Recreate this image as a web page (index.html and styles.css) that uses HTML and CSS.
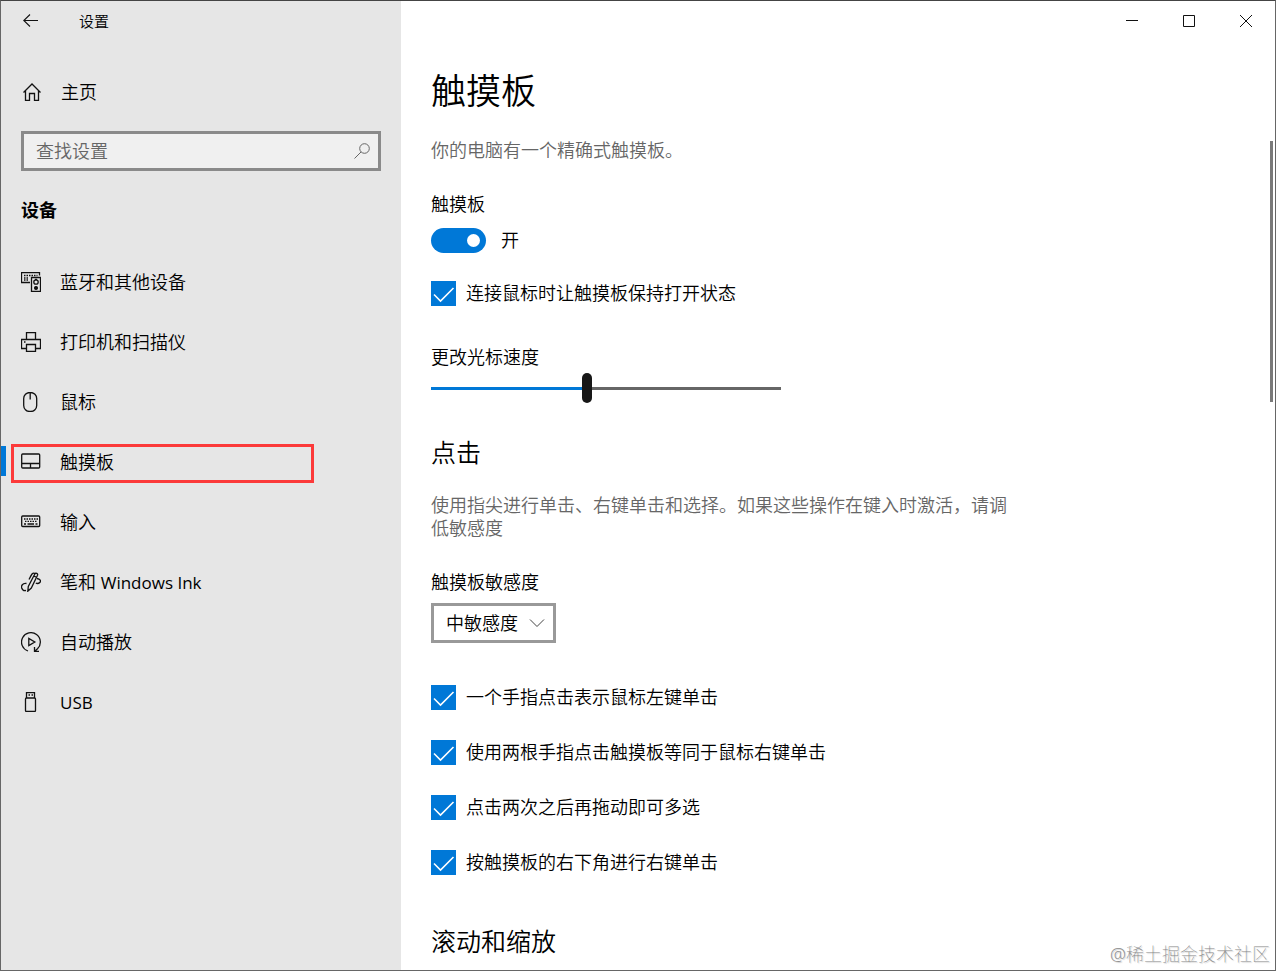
FILE: index.html
```html
<!DOCTYPE html>
<html lang="zh-CN">
<head>
<meta charset="UTF-8" />
<meta name="viewport" content="width=device-width, initial-scale=1" />
<title>设置</title>
<link rel="stylesheet" href="styles.css">
</head>
<body>

<div class="window">

  <!-- Sidebar -->
  <aside class="sidebar">
    <header class="titlebar">
      <button class="back" type="button" aria-label="返回">
        <svg width="16" height="14" viewBox="0 0 16 14"><path d="M7 .5L.8 6.500 7 12.500M.8 6.500H15" /></svg>
      </button>
      <span class="app-name">设置</span>
    </header>

    <a class="home" href="#">
      <svg width="20" height="20" viewBox="0 0 20 20"><path d="M1.500 10.500L10 2l8.500 8.500M3.500 9v9.300h4v-6.800h5v6.800h4V9" /></svg>
      <span>主页</span>
    </a>

    <div class="search">
      <input type="text" placeholder="查找设置" aria-label="查找设置" />
      <svg width="16" height="16" viewBox="0 0 16 16"><circle cx="10.500" cy="5.500" r="4.800" /><path d="M7 9l-6.500 6.500" /></svg>
    </div>

    <h2 class="group">设备</h2>

    <nav class="menu">
      <a href="#">
        <svg width="20" height="20" viewBox="0 0 20 20">
          <path d="M9 10.500H.5V.5h18v3" />
          <path d="M3 3.500h13.500M3 6h5M3 8h5" stroke-dasharray="1.500 1" />
          <path d="M10.500 5.500h9v14h-9z" />
          <circle cx="15" cy="10" r="2.200" /><circle cx="15" cy="16" r="1.400" class="solid" /><path d="M14 7.500h2" />
        </svg>
        <span>蓝牙和其他设备</span>
      </a>
      <a href="#">
        <svg width="20" height="20" viewBox="0 0 20 20">
          <path d="M5.500 7.500v-7h9v7M5.500 16.500h-5v-9h19v9h-5M5.500 12.500h9v7h-9zM3 10h1.500" />
        </svg>
        <span>打印机和扫描仪</span>
      </a>
      <a href="#">
        <svg width="20" height="20" viewBox="0 0 20 20"><rect x="2.700" y=".5" width="13" height="19" rx="6" /><path d="M9.200 1v6.500" /></svg>
        <span>鼠标</span>
      </a>
      <a href="#" class="current" aria-current="page">
        <svg width="20" height="20" viewBox="0 0 20 20"><rect x=".7" y="2" width="18" height="14" rx="1" /><path d="M1 11.500h18M9.500 11.500V16" /></svg>
        <span>触摸板</span>
      </a>
      <a href="#">
        <svg width="20" height="20" viewBox="0 0 20 20">
          <rect x=".7" y="4" width="18" height="10.500" rx="1" />
          <path d="M3 7h14" stroke-dasharray="1.500 1" /><path d="M4 9.300h12" stroke-dasharray="1.500 1" />
          <path d="M3 12h2M6.500 12h6.500M14.500 12h2" />
        </svg>
        <span>输入</span>
      </a>
      <a href="#">
        <svg width="20" height="20" viewBox="0 0 20 20">
          <path d="M6.800 19.200l.5-4.700L13.800 2c.9-1.600 3.400-.4 2.700 1.300L10.300 16zM12.800 4l2.800 1.400M13.600 1.300C11.500.3 10.500 2.500 8 7.500" />
          <path d="M5.500 11.500C1.500 10.800 0 14 .7 16c.7 2 2.300 3 4.300 2.500" />
          <path d="M16 6.500c3.300.5 4.300 2.500 2.800 4-1 1-2.500 1.200-4 .7" />
        </svg>
        <span>笔和 <span class="latin" lang="en">Windows Ink</span></span>
      </a>
      <a href="#">
        <svg width="20" height="20" viewBox="0 0 20 20">
          <path d="M7 19A9.400 9.400 0 1 1 16.500 16.800L13.500 19.500M13.500 15v4.500H18" />
          <path d="M7.800 6.500v7l6-3.500z" />
        </svg>
        <span>自动播放</span>
      </a>
      <a href="#">
        <svg width="20" height="20" viewBox="0 0 20 20">
          <rect x="4.500" y="6" width="10" height="13.500" rx="1" /><path d="M5.500 6V.5h8V6M7.500 3h1.500M10.500 3h1.500" />
        </svg>
        <span class="latin" lang="en">USB</span>
      </a>
    </nav>
  </aside>

  <!-- Page -->
  <main class="page">
    <header class="titlebar controls">
      <button type="button" aria-label="最小化"><svg width="12" height="12" viewBox="0 0 12 12"><path d="M0 5.500h12" /></svg></button>
      <button type="button" aria-label="最大化"><svg width="12" height="12" viewBox="0 0 12 12"><path d="M.5 .5h11v11H.5z" /></svg></button>
      <button type="button" aria-label="关闭"><svg width="12" height="12" viewBox="0 0 12 12"><path d="M0 0l12 12M12 0L0 12" /></svg></button>
    </header>

    <div class="content">
      <section class="intro">
        <h1>触摸板</h1>
        <p>你的电脑有一个精确式触摸板。</p>

        <label class="caption" for="touchpad">触摸板</label>
        <div class="toggle">
          <input type="checkbox" role="switch" id="touchpad" checked />
          <span>开</span>
        </div>

        <label class="check">
          <input type="checkbox" checked />
          <svg width="25" height="25" viewBox="0 0 25 25"><path d="M3 13.500l6.500 6.500L22.500 7" /></svg>
          <span>连接鼠标时让触摸板保持打开状态</span>
        </label>

        <label class="caption speed" for="speed">更改光标速度</label>
        <input class="slider" type="range" id="speed" min="0" max="9" value="4" />
      </section>

      <section class="taps">
        <h2>点击</h2>
        <p>使用指尖进行单击、右键单击和选择。如果这些操作在键入时激活，请调低敏感度</p>

        <label class="caption" for="sensitivity">触摸板敏感度</label>
        <div class="dropdown">
          <select id="sensitivity">
            <option>中敏感度</option>
          </select>
          <svg width="16" height="10" viewBox="0 0 16 10"><path d="M1 1.500l7 7 7-7" /></svg>
        </div>

        <div class="checks">
          <label class="check">
            <input type="checkbox" checked />
            <svg width="25" height="25" viewBox="0 0 25 25"><path d="M3 13.500l6.500 6.500L22.500 7" /></svg>
            <span>一个手指点击表示鼠标左键单击</span>
          </label>
          <label class="check">
            <input type="checkbox" checked />
            <svg width="25" height="25" viewBox="0 0 25 25"><path d="M3 13.500l6.500 6.500L22.500 7" /></svg>
            <span>使用两根手指点击触摸板等同于鼠标右键单击</span>
          </label>
          <label class="check">
            <input type="checkbox" checked />
            <svg width="25" height="25" viewBox="0 0 25 25"><path d="M3 13.500l6.500 6.500L22.500 7" /></svg>
            <span>点击两次之后再拖动即可多选</span>
          </label>
          <label class="check">
            <input type="checkbox" checked />
            <svg width="25" height="25" viewBox="0 0 25 25"><path d="M3 13.500l6.500 6.500L22.500 7" /></svg>
            <span>按触摸板的右下角进行右键单击</span>
          </label>
        </div>
      </section>

      <section class="scrolling">
        <h2>滚动和缩放</h2>
      </section>
    </div>

    <div class="scroll-thumb"></div>
    <div class="watermark">@稀土掘金技术社区</div>
  </main>

</div>

</body>
</html>
```

FILE: styles.css
```css
*, *::before, *::after {
  box-sizing: border-box;
}
body {
  margin: 0;
  font-family: "Open Sans", "Noto Sans CJK SC", sans-serif;
  font-size: 18px;
  font-weight: 350;
  line-height: 23px;
  color: #000;
}
h1, h2, p {
  margin: 0;
  font-weight: inherit;
}
a {
  color: inherit;
  text-decoration: none;
}
button {
  display: grid;
  place-items: center;
  padding: 0;
  border: none;
  background: none;
}
svg {
  fill: none;
  stroke: #111;
  stroke-width: 1.3;
}
.solid {
  fill: #111;
}
.latin {
  font-size: 17px;
  font-weight: 400;
}
.window {
  display: flex;
  height: 100vh;
  overflow: hidden;
  border: 1px solid #666;
  border-top-color: #444;
}
.titlebar {
  display: flex;
  align-items: center;
  height: 40px;
}

/* Sidebar */
.sidebar {
  flex: 0 0 400px;
  background: #e6e6e6;
}
.back {
  width: 60px;
  height: 40px;
}
.back svg {
  stroke-width: 1.1;
}
.app-name {
  padding-left: 18px;
  font-size: 15px;
}
.home {
  display: flex;
  align-items: center;
  gap: 19px;
  height: 60px;
  margin-top: 21px;
  padding-left: 21px;
}
.search {
  display: flex;
  align-items: center;
  height: 40px;
  margin: 9px 20px 0;
  padding: 0 8px 0 12px;
  border: 3px solid #8a8a8a;
  background: #f0f0f0;
}
.search input {
  flex: 1;
  min-width: 0;
  padding: 0;
  border: none;
  outline: none;
  background: none;
  font: inherit;
}
.search input::placeholder {
  color: #666;
  opacity: 1;
}
.search svg {
  stroke: #666;
  stroke-width: 1;
}
.group {
  margin: 28px 20px 0;
  font-size: 18px;
  font-weight: 700;
}
.menu {
  margin-top: 30px;
}
.menu a {
  position: relative;
  display: flex;
  align-items: center;
  gap: 19px;
  height: 60px;
  padding-left: 20px;
}
.menu .current::before {
  content: "";
  position: absolute;
  left: 0;
  top: 14px;
  width: 5px;
  height: 30px;
  background: #0078d7;
}
.menu .current::after {
  content: "";
  position: absolute;
  left: 10px;
  right: 87px;
  top: 12px;
  height: 39px;
  border: 3px solid #fc3a3a;
}

/* Page */
.page {
  position: relative;
  flex: 1;
  min-width: 0;
  background: #fff;
}
.controls {
  justify-content: flex-end;
  padding-right: 1px;
}
.controls button {
  width: 57px;
  height: 40px;
}
.controls svg {
  stroke-width: 1;
}
.content {
  padding: 27px 30px 0;
}
.content p {
  max-width: 580px;
  color: #666;
}
.content h1 {
  margin-bottom: 25px;
  font-size: 35px;
  line-height: 46px;
}
.content h2 {
  margin-bottom: 26px;
  font-size: 25px;
  line-height: 32px;
}
.caption {
  display: block;
  margin-top: 31px;
}
.toggle {
  display: flex;
  align-items: center;
  gap: 15px;
  margin: 12px 0 28px;
}
.toggle input {
  appearance: none;
  width: 55px;
  height: 25px;
  margin: 0;
  padding: 6px;
  border-radius: 13px;
  background: #0078d7;
}
.toggle input::before {
  content: "";
  display: block;
  width: 13px;
  height: 13px;
  border-radius: 50%;
  background: #fff;
}
.toggle input:checked::before {
  margin-left: auto;
}
.check {
  display: grid;
  grid-template-columns: 25px auto;
  justify-content: start;
  align-items: center;
  column-gap: 10px;
}
.check input {
  appearance: none;
  grid-area: 1 / 1;
  width: 25px;
  height: 25px;
  margin: 0;
  border: 2px solid #666;
}
.check input:checked {
  border: none;
  background: #0078d7;
}
.check svg {
  grid-area: 1 / 1;
  stroke: #fff;
  stroke-width: 1.6;
  pointer-events: none;
}
.speed {
  margin-top: 40px;
}
.slider {
  appearance: none;
  display: block;
  width: 350px;
  height: 30px;
  margin: 4px 0 33px;
  background: none;
}
.slider::-webkit-slider-runnable-track {
  height: 3px;
  background: linear-gradient(to right, #0078d7 45%, #666 45%);
}
.slider::-webkit-slider-thumb {
  appearance: none;
  width: 10px;
  height: 30px;
  margin-top: -14px;
  border-radius: 5px;
  background: #171717;
}
.dropdown {
  display: inline-grid;
  align-items: center;
  margin-top: 9px;
}
.dropdown select {
  appearance: none;
  grid-area: 1 / 1;
  width: 125px;
  height: 40px;
  padding: 0 12px;
  border: 3px solid #999;
  border-radius: 0;
  background: #fff;
  color: #000;
  font: inherit;
}
.dropdown svg {
  grid-area: 1 / 1;
  justify-self: end;
  margin-right: 11px;
  stroke: #444;
  stroke-width: 1;
  pointer-events: none;
}
.checks {
  display: grid;
  gap: 30px;
  margin: 42px 0 50px;
}
.scroll-thumb {
  position: absolute;
  top: 140px;
  right: 2px;
  width: 3px;
  height: 261px;
  background: #7a7a7a;
}
.watermark {
  position: absolute;
  right: 5px;
  bottom: 4px;
  color: #888;
  font-weight: 100;
  text-shadow: 1px 1px 1px #ccc;
}
```
